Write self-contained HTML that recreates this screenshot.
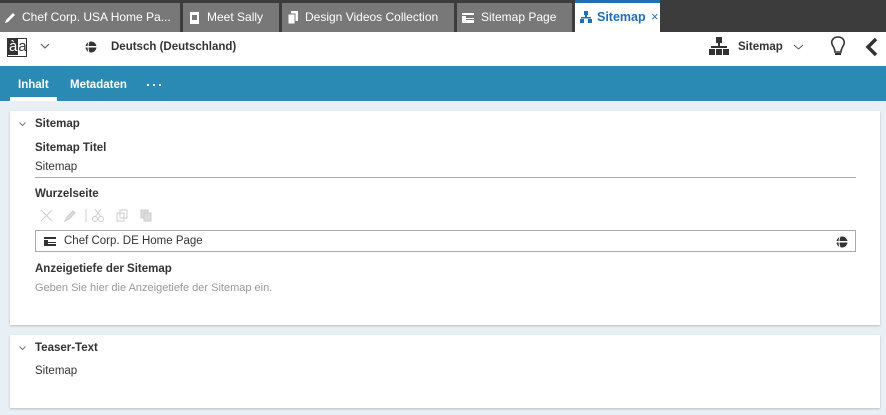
<!DOCTYPE html><html><head><style>
*{box-sizing:border-box;margin:0;padding:0}
body{width:886px;height:415px;overflow:hidden;background:#e8f0f5;font-family:"Liberation Sans",sans-serif;font-size:12px;line-height:16px;color:#333;position:relative}
.abs{position:absolute}
.tab{position:absolute;top:3px;height:29px;background:#787878;color:#fff;font-size:12px;line-height:29px;padding-left:22px;white-space:nowrap}
.b{font-weight:bold}
.n{font-size:11.5px}
.panel{position:absolute;left:10px;width:870px;background:#fff;box-shadow:0 1px 2px #bbb}
</style></head><body>
<div class="abs" style="left:0;top:0;width:886px;height:32px;background:#3c3c3c"></div>
<div class="tab" style="left:0;width:180px"><svg class="abs" style="left:4px;top:9px" width="12" height="12"><path d="M1 11 L2 8 L9 1 L11 3 L4 10 Z" fill="#fff"/></svg>Chef Corp. USA Home Pa...</div>
<div class="tab" style="left:183px;width:96px;padding-left:24px"><svg class="abs" style="left:7px;top:9px" width="10" height="12"><rect x="0" y="0" width="9" height="12" fill="#fff"/><rect x="2" y="3" width="5" height="5" fill="#787878"/></svg>Meet Sally</div>
<div class="tab" style="left:282px;width:172px;padding-left:23px"><svg class="abs" style="left:5px;top:8px" width="12" height="13"><rect x="4" y="0" width="7" height="10" fill="#fff"/><rect x="1" y="3" width="7" height="10" fill="#fff" stroke="#787878"/></svg>Design Videos Collection</div>
<div class="tab" style="left:457px;width:115px;padding-left:24px"><svg class="abs" style="left:5px;top:10px" width="12" height="10"><rect width="12" height="10" fill="#fff"/><rect x="4" y="3" width="8" height="2" fill="#787878"/><rect x="4" y="6" width="8" height="1" fill="#787878"/><rect x="0" y="2" width="12" height="1" fill="#787878"/></svg>Sitemap Page</div>
<div class="tab b" style="left:575px;width:85px;top:0;height:32px;background:#fff;color:#1d70b8;border-top:3px solid #1d70b8;padding-left:22px;font-size:12.5px"><svg class="abs" style="left:5px;top:8px" width="12" height="12" fill="#1d70b8"><rect x="4" y="0" width="4" height="4"/><rect x="5" y="4" width="2" height="3"/><rect x="1" y="6" width="10" height="1.5"/><rect x="0" y="8" width="4" height="4"/><rect x="8" y="8" width="4" height="4"/></svg>Sitemap <span style="font-weight:normal;margin-left:2px">×</span></div>
<div class="abs" style="left:0;top:32px;width:886px;height:34px;background:#fff"></div>
<div class="abs" style="left:7px;top:38px;width:20px;height:19px;border:1px solid #333;font-size:15px;line-height:16px"><span style="background:#333;color:#fff;padding:0 1px">à</span>a</div>
<svg class="abs" style="left:40px;top:43px" width="10" height="6"><path d="M1 1 L5 5 L9 1" stroke="#555" fill="none"/></svg>
<svg class="abs" style="left:85px;top:41px" width="12" height="12"><circle cx="6" cy="6" r="5.5" fill="#333"/><rect x="0" y="5" width="12" height="1.5" fill="#fff"/><path d="M4 0.5 Q2 6 4 11.5" stroke="#fff" fill="none"/></svg>
<div class="abs b" style="left:111px;top:39px;font-size:11.5px">Deutsch (Deutschland)</div>
<svg class="abs" style="left:709px;top:37px" width="20" height="20" fill="#333"><rect x="7" y="0" width="6" height="6"/><rect x="9" y="6" width="2" height="4"/><rect x="2" y="9" width="16" height="2"/><rect x="0" y="12" width="6" height="6"/><rect x="7" y="12" width="6" height="6"/><rect x="14" y="12" width="6" height="6"/></svg>
<div class="abs b" style="left:738px;top:39px;font-size:11.5px">Sitemap</div>
<svg class="abs" style="left:793px;top:44px" width="11" height="6"><path d="M1 1 L5.5 5 L10 1" stroke="#555" fill="none"/></svg>
<svg class="abs" style="left:830px;top:36px" width="16" height="22"><path d="M8 1 C3 1 1 5 2 8 C3 11 5 12 5 16 L11 16 C11 12 13 11 14 8 C15 5 13 1 8 1Z" stroke="#333" stroke-width="1.6" fill="none"/><rect x="5" y="17" width="6" height="2" fill="#333"/></svg>
<svg class="abs" style="left:865px;top:37px" width="14" height="20"><path d="M11 2 L3 10 L11 18" stroke="#333" stroke-width="3.5" fill="none"/></svg>
<div class="abs" style="left:0;top:66px;width:886px;height:35px;background:#2a8ab4"></div>
<div class="abs b" style="left:18px;top:77px;color:#fff;font-size:11.5px">Inhalt</div>
<div class="abs b" style="left:70px;top:77px;color:#fff;font-size:11.5px">Metadaten</div>
<svg class="abs" style="left:147px;top:84px" width="16" height="3" fill="#fff"><rect x="0" y="0" width="2" height="2"/><rect x="6" y="0" width="2" height="2"/><rect x="12" y="0" width="2" height="2"/></svg>
<div class="abs" style="left:10px;top:97px;width:47px;height:4px;background:#fff"></div>
<div class="panel" style="top:111px;height:214px">
<svg class="abs" style="left:9px;top:11px" width="7" height="5"><path d="M0.5 0.5 L3.5 3.5 L6.5 0.5" stroke="#777" fill="none"/></svg>
<div class="abs b n" style="left:25px;top:5px">Sitemap</div>
<div class="abs b n" style="left:25px;top:29px">Sitemap Titel</div>
<div class="abs n" style="left:25px;top:48px">Sitemap</div>
<div class="abs" style="left:25px;top:66px;width:821px;height:1px;background:#aaa"></div>
<div class="abs b n" style="left:25px;top:75px">Wurzelseite</div>
<svg class="abs" style="left:30px;top:98px" width="120" height="14" stroke="#ccc" fill="none"><path d="M1 1 L12 12 M12 1 L1 12"/><path d="M25 12 L27 8 L33 2 L35 4 L29 10Z" fill="#ddd"/><path d="M46 0 V13"/><circle cx="55" cy="10" r="2.5"/><circle cx="61" cy="10" r="2.5"/><path d="M55 8 L61 0 M61 8 L55 0"/><rect x="77" y="4" width="7" height="8"/><rect x="80" y="1" width="7" height="8"/><rect x="101" y="1" width="7" height="8" fill="#ddd"/><rect x="104" y="4" width="7" height="8" fill="#ddd"/></svg>
<div class="abs" style="left:25px;top:119px;width:821px;height:22px;border:1px solid #aaa"></div>
<svg class="abs" style="left:34px;top:126px" width="12" height="9"><rect width="12" height="9" fill="#333"/><rect x="4" y="3" width="8" height="2" fill="#fff"/><rect x="0" y="2" width="12" height="1" fill="#fff"/><rect x="4" y="6" width="8" height="1" fill="#fff"/></svg>
<div class="abs n" style="left:54px;top:122px">Chef Corp. DE Home Page</div>
<svg class="abs" style="left:826px;top:125px" width="12" height="12"><circle cx="6" cy="6" r="5.5" fill="#333"/><rect x="0" y="5" width="12" height="1.5" fill="#fff"/><path d="M4 0.5 Q2 6 4 11.5" stroke="#fff" fill="none"/></svg>
<div class="abs b n" style="left:25px;top:150px">Anzeigetiefe der Sitemap</div>
<div class="abs" style="left:25px;top:169px;color:#999;font-size:11px">Geben Sie hier die Anzeigetiefe der Sitemap ein.</div>
</div>
<div class="panel" style="top:335px;height:73px">
<svg class="abs" style="left:9px;top:11px" width="7" height="5"><path d="M0.5 0.5 L3.5 3.5 L6.5 0.5" stroke="#777" fill="none"/></svg>
<div class="abs b n" style="left:25px;top:5px">Teaser-Text</div>
<div class="abs n" style="left:25px;top:28px">Sitemap</div>
</div>
</body></html>
